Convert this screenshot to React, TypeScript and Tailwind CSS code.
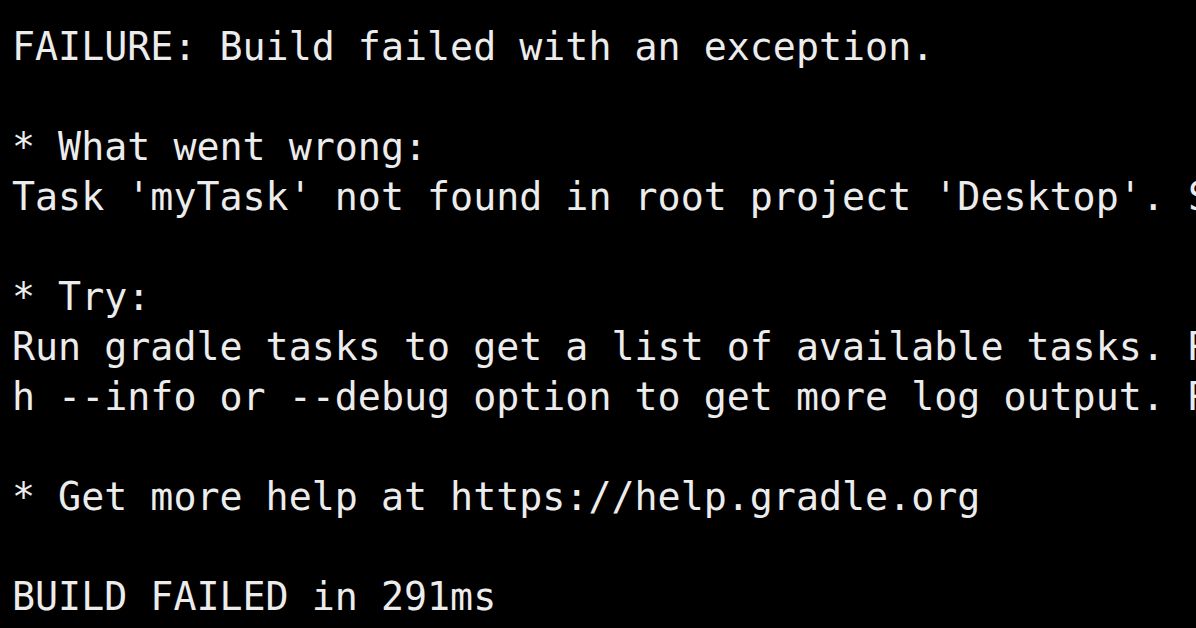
const lines = [
  'FAILURE: Build failed with an exception.',
  '',
  '* What went wrong:',
  "Task 'myTask' not found in root project 'Desktop'. Some candidates are: 'tasks'.",
  '',
  '* Try:',
  'Run gradle tasks to get a list of available tasks. Run wit',
  'h --info or --debug option to get more log output. Run with --scan to get full insights.',
  '',
  '* Get more help at https://help.gradle.org',
  '',
  'BUILD FAILED in 291ms',
];

export default function App() {
  return (
    <div className="w-[1196px] h-[628px] bg-black overflow-hidden pt-[22px] pl-[12px]">
      <div className="font-['DejaVu_Sans_Mono','Liberation_Mono',monospace] text-[38.3px] leading-[50px] text-[#ececec] whitespace-pre">
        {lines.map((line, i) => (
          <div key={i} className="h-[50px]">
            {line}
          </div>
        ))}
      </div>
    </div>
  );
}
